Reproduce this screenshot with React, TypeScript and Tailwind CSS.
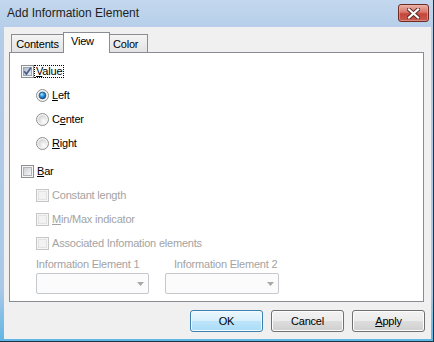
import { useId } from "react"
import type { ReactNode } from "react"

const FONT = "font-['Liberation_Sans',Arial,sans-serif]"

function CheckBox({ checked = false, disabled = false }: { checked?: boolean; disabled?: boolean }) {
  const id = useId().replace(/:/g, "")
  return (
    <svg width="13" height="13" viewBox="0 0 13 13" className="shrink-0">
      <defs>
        <linearGradient id={`cb${id}`} x1="0" y1="0" x2="1" y2="1">
          <stop offset="0" stopColor={checked ? "#a9b5c8" : "#c9cdd3"} />
          <stop offset="1" stopColor={checked ? "#edf1f6" : "#f8f8f8"} />
        </linearGradient>
      </defs>
      <rect x="0.5" y="0.5" width="12" height="12" fill="#f6f6f6" stroke={disabled ? "#c6c6c6" : "#8e8f8f"} />
      {disabled ? (
        <rect x="2.5" y="2.5" width="8" height="8" fill="#f2f2f2" stroke="#e2e2e2" />
      ) : (
        <rect x="2.5" y="2.5" width="8" height="8" fill={`url(#cb${id})`} stroke={checked ? "#9aa5b6" : "#b0b4ba"} />
      )}
      {checked && <path d="M3.2 6.2 L5.4 9 L9.9 2.8" fill="none" stroke="#4a5d93" strokeWidth="1.7" />}
    </svg>
  )
}

function Radio({ checked = false }: { checked?: boolean }) {
  const id = useId().replace(/:/g, "")
  return (
    <svg width="13" height="13" viewBox="0 0 13 13" className="shrink-0">
      <defs>
        <radialGradient id={`rb${id}`} cx="0.65" cy="0.7" r="0.7">
          <stop offset="0" stopColor="#ffffff" />
          <stop offset="1" stopColor="#d4d4d4" />
        </radialGradient>
        <radialGradient id={`rd${id}`} cx="0.4" cy="0.35" r="0.7">
          <stop offset="0" stopColor="#b4e6ff" />
          <stop offset="0.45" stopColor="#2c93da" />
          <stop offset="1" stopColor="#0b4a86" />
        </radialGradient>
      </defs>
      <circle cx="6.5" cy="6.5" r="6" fill="#f4f4f4" stroke="#8e8f8f" />
      <circle cx="6.5" cy="6.5" r="4.3" fill={`url(#rb${id})`} />
      {checked && <circle cx="6.5" cy="6.5" r="3.4" fill={`url(#rd${id})`} stroke="#1c3f66" strokeWidth="0.6" />}
    </svg>
  )
}

function Combo({ width }: { width: string }) {
  return (
    <div className={`${width} h-[21px] rounded-[2px] border border-[#c5c8cc] bg-[#fbfbfb] flex items-center justify-end pr-[4px]`}>
      <svg width="7" height="4" viewBox="0 0 7 4">
        <path d="M0 0 H7 L3.5 4 Z" fill="#a8a8a8" />
      </svg>
    </div>
  )
}

function Btn({ children, primary = false }: { children: ReactNode; primary?: boolean }) {
  return (
    <button
      className={
        primary
          ? "w-[73px] h-[22px] rounded-[3px] border border-[#3c7fb1] bg-[linear-gradient(#ebf7fe,#d6effc_50%,#bde5fb_50%,#a9dcf7)] shadow-[inset_0_0_0_1px_#f4fbff] flex items-center justify-center text-black"
          : "w-[73px] h-[22px] rounded-[3px] border border-[#707070] bg-[linear-gradient(#f2f2f2,#ebebeb_50%,#dddddd_50%,#cfcfcf)] shadow-[inset_0_0_0_1px_#fcfcfc] flex items-center justify-center text-black"
      }
    >
      {children}
    </button>
  )
}

function Row({ indent, children }: { indent: string; children: ReactNode }) {
  return <div className={`h-[24px] flex items-center ${indent}`}>{children}</div>
}

export default function App() {
  return (
    <div className={`w-[434px] h-[342px] flex flex-col bg-[linear-gradient(#c4d8ee,#b3cce8_10%,#a9c8e8_85%,#5fb6e3)] border-r border-b border-[#1d3347] ${FONT} text-[11px] tracking-[-0.2px] text-black`}>
      {/* caption */}
      <div className="h-[27px] flex items-start justify-between pl-[7px] pr-[4px] shrink-0">
        <span className="mt-[6px] text-[12px] leading-[15px] tracking-normal text-[#1e1e1e]">Add Information Element</span>
        <div className="mt-[4px] w-[31px] h-[18px] rounded-[3px] border border-[#6e2b24] bg-[linear-gradient(#eab2a6,#d9776b_45%,#c4473c_55%,#c9594c)] shadow-[inset_0_0_0_1px_#f0b9ae80] flex items-center justify-center">
          <svg width="13" height="11" viewBox="0 0 13 11">
            <path d="M2 1.5 L11 9.5 M11 1.5 L2 9.5" stroke="#5a2620" strokeWidth="4" strokeLinecap="square" />
            <path d="M2 1.5 L11 9.5 M11 1.5 L2 9.5" stroke="#ffffff" strokeWidth="2.2" strokeLinecap="square" />
          </svg>
        </div>
      </div>

      {/* client */}
      <div className="ml-[4px] w-[427px] h-[312px] bg-[#f0f0f0] flex flex-col">
        {/* tabs */}
        <div className="mt-[5px] h-[20px] flex items-end pl-[7px] relative z-10">
          <div className="w-[53px] h-[18px] border-l border-t border-r border-[#898c95] bg-[linear-gradient(#f4f4f4,#e3e3e3)] flex items-center justify-center pt-[1px]">
            Contents
          </div>
          <div className="-ml-px w-[47px] h-[21px] -mb-px border-l border-t border-r border-[#898c95] bg-white flex items-center pl-[7px] pb-[3px]">
            View
          </div>
          <div className="w-[38px] h-[18px] border-t border-r border-[#898c95] bg-[linear-gradient(#f4f4f4,#e3e3e3)] flex items-center pl-[3px] pt-[1px]">
            Color
          </div>
        </div>

        {/* tab panel */}
        <div className="ml-[5px] w-[415px] h-[250px] border border-[#898c95] bg-white pt-[6px] flex flex-col">
          <Row indent="pl-[11px]">
            <CheckBox checked />
            <span className="ml-0 border border-dotted border-black px-px leading-[11px]">
              <span className="underline">V</span>alue
            </span>
          </Row>
          <Row indent="pl-[26px]">
            <Radio checked />
            <span className="ml-[3px]">
              <span className="underline">L</span>eft
            </span>
          </Row>
          <Row indent="pl-[26px]">
            <Radio />
            <span className="ml-[3px]">
              C<span className="underline">e</span>nter
            </span>
          </Row>
          <Row indent="pl-[26px]">
            <Radio />
            <span className="ml-[3px]">
              <span className="underline">R</span>ight
            </span>
          </Row>

          <div className="h-[4px]" />

          <Row indent="pl-[11px]">
            <CheckBox />
            <span className="ml-[3px]">
              <span className="underline">B</span>ar
            </span>
          </Row>
          <Row indent="pl-[26px]">
            <CheckBox disabled />
            <span className="ml-[3px] text-[#a3a3a3]">Constant length</span>
          </Row>
          <Row indent="pl-[26px]">
            <CheckBox disabled />
            <span className="ml-[3px] text-[#a3a3a3]">
              <span className="underline">M</span>in/Max indicator
            </span>
          </Row>
          <Row indent="pl-[26px]">
            <CheckBox disabled />
            <span className="ml-[3px] text-[#a3a3a3]">Associated Infomation elements</span>
          </Row>

          <div className="mt-[3px] h-[12px] flex items-center pl-[26px] text-[#a3a3a3]">
            <span className="w-[138px]">Information Element 1</span>
            <span>Information Element 2</span>
          </div>
          <div className="mt-[3px] flex pl-[26px] gap-[16px]">
            <Combo width="w-[113px]" />
            <Combo width="w-[114px]" />
          </div>
        </div>

        {/* buttons */}
        <div className="mt-[8px] flex justify-end gap-[8px] pr-[6px]">
          <Btn primary>OK</Btn>
          <Btn>Cancel</Btn>
          <Btn>
            <span className="underline">A</span>pply
          </Btn>
        </div>
      </div>
    </div>
  )
}
